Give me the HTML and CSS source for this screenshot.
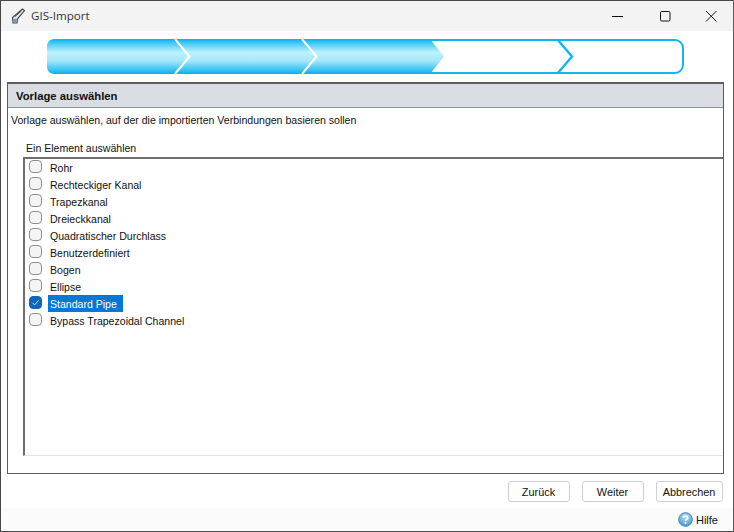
FILE: index.html
```html
<!DOCTYPE html>
<html lang="de">
<head>
<meta charset="utf-8">
<title>GIS-Import</title>
<link rel="stylesheet" href="styles.css">
</head>
<body>
<div class="window">
  <header class="titlebar">
    <svg class="app-icon" width="16" height="16" viewBox="0 0 16 16">
      <path d="M3 15 L2.5 9.5 L12.5 1 L14.5 2.5 L7.5 10.8 L7 15 Z" fill="#e6e6e6" stroke="#444" stroke-width="1.1"/>
      <path d="M3.2 10.4 L6.8 11 L6.4 14.5 L3.6 14.5 Z" fill="#5f9fc4"/>
      <path d="M5 8.5 L11.5 2.8" stroke="#444" stroke-width="1"/>
    </svg>
    <span class="title">GIS-Import</span>
    <div class="win-controls">
      <svg width="46" height="31" viewBox="0 0 46 31"><path d="M16 15.5 H27" stroke="#111" stroke-width="1"/></svg>
      <svg width="46" height="31" viewBox="0 0 46 31"><rect x="18.5" y="10.5" width="9.5" height="9.5" rx="1.2" fill="none" stroke="#111" stroke-width="1"/></svg>
      <svg width="46" height="31" viewBox="0 0 46 31"><path d="M18 10 L28.5 20.5 M28.5 10 L18 20.5" stroke="#111" stroke-width="1"/></svg>
    </div>
  </header>

  <div class="progress-wrap">
    <svg class="progress" width="637" height="35" viewBox="0 0 637 35">
      <defs>
        <linearGradient id="fill" x1="0" y1="0" x2="0" y2="1">
          <stop offset="0" stop-color="#00b4f0"/>
          <stop offset="0.12" stop-color="#45c8f5"/>
          <stop offset="0.38" stop-color="#bdf1fd"/>
          <stop offset="0.62" stop-color="#a5e8fb"/>
          <stop offset="0.88" stop-color="#3cc3f3"/>
          <stop offset="1" stop-color="#00b1ef"/>
        </linearGradient>
      </defs>
      <rect x="1" y="1" width="635" height="33" rx="8" fill="#fff" stroke="#12b5ef" stroke-width="2"/>
      <path d="M8 0 H383 L397 17.5 L383 35 H8 Q0 35 0 27 V8 Q0 0 8 0 Z" fill="url(#fill)"/>
      <path d="M128 0 L142.5 17.5 L128 35" fill="none" stroke="#fff" stroke-width="2"/>
      <path d="M255 0 L269.5 17.5 L255 35" fill="none" stroke="#fff" stroke-width="2"/>
      <path d="M510 0 L525 17.5 L510 35" fill="none" stroke="#12b5ef" stroke-width="2.4"/>
    </svg>
  </div>

  <main class="panel">
    <h1 class="panel-head">Vorlage auswählen</h1>
    <p class="panel-desc">Vorlage auswählen, auf der die importierten Verbindungen basieren sollen</p>
    <div class="list-label">Ein Element auswählen</div>
    <ul class="list">
      <li class="row"><span class="box"></span><span class="text">Rohr</span></li>
      <li class="row"><span class="box"></span><span class="text">Rechteckiger Kanal</span></li>
      <li class="row"><span class="box"></span><span class="text">Trapezkanal</span></li>
      <li class="row"><span class="box"></span><span class="text">Dreieckkanal</span></li>
      <li class="row"><span class="box"></span><span class="text">Quadratischer Durchlass</span></li>
      <li class="row"><span class="box"></span><span class="text">Benutzerdefiniert</span></li>
      <li class="row"><span class="box"></span><span class="text">Bogen</span></li>
      <li class="row"><span class="box"></span><span class="text">Ellipse</span></li>
      <li class="row selected"><span class="box checked"><svg width="13" height="13" viewBox="0 0 13 13"><path d="M3.5 6.8 L5.6 8.9 L9.7 4.3" fill="none" stroke="#cfe2f5" stroke-width="1"/></svg></span><span class="text">Standard Pipe</span></li>
      <li class="row"><span class="box"></span><span class="text">Bypass Trapezoidal Channel</span></li>
    </ul>
  </main>

  <div class="actions">
    <button class="btn">Zurück</button>
    <button class="btn">Weiter</button>
    <button class="btn btn-wide">Abbrechen</button>
  </div>

  <footer class="footer">
    <svg width="15" height="15" viewBox="0 0 15 15">
      <defs>
        <radialGradient id="help" cx="0.5" cy="0.3" r="0.8">
          <stop offset="0" stop-color="#b5e0f5"/>
          <stop offset="1" stop-color="#3d8fc4"/>
        </radialGradient>
      </defs>
      <circle cx="7.5" cy="7.5" r="6.8" fill="url(#help)" stroke="#3a86b8" stroke-width="1"/>
      <path d="M5.2 5.8 C5.4 3.6 9.8 3.6 9.8 5.9 C9.8 7.4 7.5 7.3 7.5 9" fill="none" stroke="#fff" stroke-width="1.6"/>
      <circle cx="7.5" cy="11.1" r="1" fill="#fff"/>
    </svg>
    <span class="help-text">Hilfe</span>
  </footer>
</div>
</body>
</html>
```

FILE: styles.css
```css
* { box-sizing: border-box; }
html, body { margin: 0; padding: 0; }
body {
  width: 734px;
  height: 532px;
  overflow: hidden;
  font-family: "Liberation Sans", Arial, sans-serif;
  font-size: 10.55px;
  color: #111;
  background: #fff;
}
.window {
  width: 734px;
  height: 532px;
  border: 1px solid #474747;
  border-right-color: #5a5a5a;
  display: flex;
  flex-direction: column;
  background: #fff;
}
.titlebar {
  height: 30px;
  flex: none;
  background: #f3f3f3;
  display: flex;
  align-items: center;
  padding-left: 9px;
}
.app-icon { flex: none; }
.title {
  margin-left: 5px;
  margin-bottom: 2px;
  font-family: "Open Sans", sans-serif;
  font-size: 11.6px;
  color: #333;
}
.win-controls {
  margin-left: auto;
  display: flex;
  margin-right: -1px;
}
.progress-wrap {
  padding: 8px 0 0 46px;
  height: 51px;
  flex: none;
}
.progress { display: block; }
.panel {
  margin-left: 6px;
  width: 717px;
  height: 392px;
  flex: none;
  border: 1px solid #5c5c5c;
  border-top-width: 2px;
  display: flex;
  flex-direction: column;
}
.panel-head {
  margin: 0;
  height: 24px;
  flex: none;
  background: #d9dde1;
  border-bottom: 1px solid #8b949b;
  font-size: 11.3px;
  font-weight: 700;
  line-height: 24px;
  padding-left: 8px;
  color: #111;
}
.panel-desc {
  margin: 0;
  padding: 4px 0 0 3px;
  line-height: 16px;
  height: 32px;
  flex: none;
}
.list-label {
  padding-left: 18px;
  height: 17px;
  line-height: 16px;
  flex: none;
}
.list {
  list-style: none;
  margin: 0 0 17px 15px;
  padding: 0 0 0 4px;
  flex: 1;
  border-top: 2px solid #6e6e6e;
  border-left: 2px solid #6e6e6e;
  border-bottom: 1px solid #e3e3e3;
}
.row {
  height: 17px;
  display: flex;
  align-items: center;
}
.box {
  width: 13px;
  height: 13px;
  flex: none;
  border: 1px solid #8f8f8f;
  border-radius: 4px;
  background: #f4f4f4;
  margin-top: -3px;
}
.box.checked {
  background: #0f65bd;
  border-color: #0f65bd;
}
.box.checked svg {
  display: block;
  margin: -1px;
}
.text {
  margin-left: 6px;
  padding: 0 2px;
  height: 17px;
  line-height: 19px;
  white-space: nowrap;
}
.selected .text {
  background: #0078d7;
  color: #fff;
  padding-right: 6px;
}
.actions {
  height: 34px;
  flex: none;
  display: flex;
  justify-content: flex-end;
  align-items: flex-start;
  gap: 12px;
  padding: 7px 10px 0 0;
}
.btn {
  width: 62px;
  height: 21px;
  padding: 0 1px 0 0;
  font: inherit;
  font-size: 10.9px;
  color: #111;
  background: #fff;
  border: 1px solid #cfcfcf;
  border-radius: 3px;
}
.btn-wide { width: 67px; }
.footer {
  flex: 1;
  background: #fbfbfb;
  display: flex;
  align-items: center;
  justify-content: flex-end;
  gap: 3px;
  padding-right: 15px;
}
.help-text { font-size: 11px; }
```
